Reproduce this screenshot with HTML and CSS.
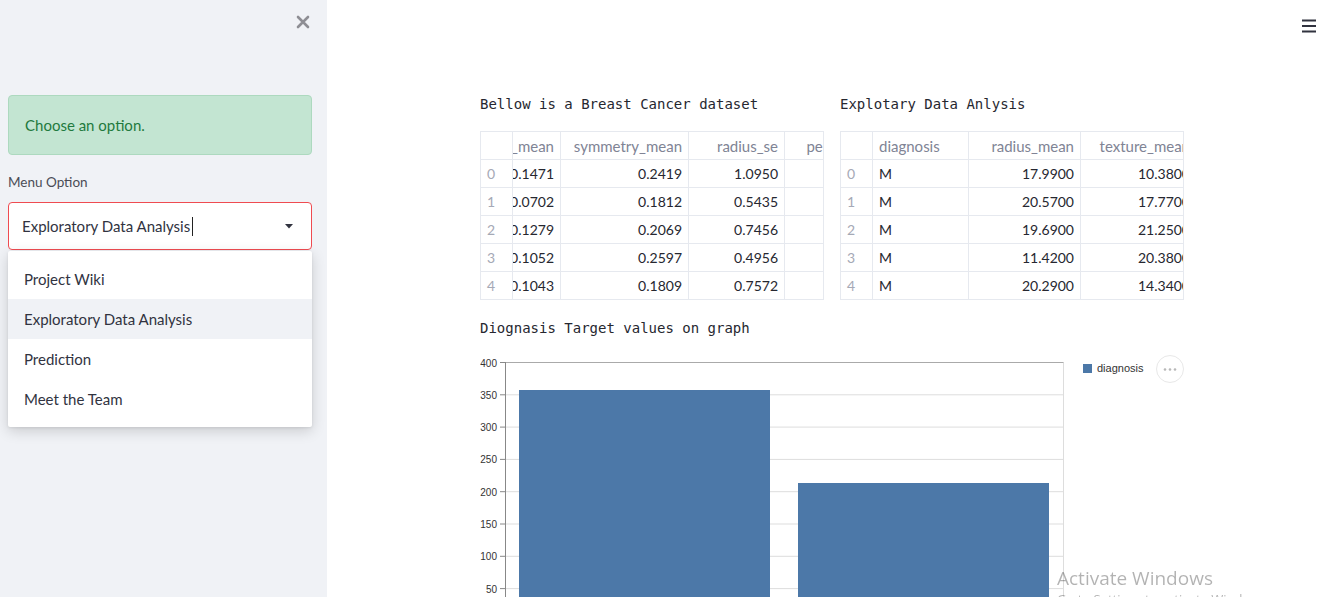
FILE: index.html
```html
<!DOCTYPE html>
<html lang="en">
<head>
<meta charset="utf-8">
<title>Breast Cancer App</title>
<link rel="stylesheet" href="styles.css">
</head>
<body>
<div class="app">
  <aside class="sidebar">
    <div class="sb-top">
      <button class="close-btn" aria-label="Close sidebar">
        <svg width="14" height="14" viewBox="0 0 14 14"><path d="M2 2 L12 12 M12 2 L2 12" stroke="#8e8e94" stroke-width="2.6" stroke-linecap="round"/></svg>
      </button>
    </div>
    <div class="alert">Choose an option.</div>
    <label class="field-label">Menu Option</label>
    <div class="select-wrap">
      <div class="select">
        <span class="select-value">Exploratory Data Analysis</span><span class="cursor"></span>
        <svg class="caret" width="10" height="6" viewBox="0 0 10 6"><path d="M1 1 L9 1 L5 5.5 Z" fill="#31333f"/></svg>
      </div>
      <ul class="menu">
        <li>Project Wiki</li>
        <li class="active">Exploratory Data Analysis</li>
        <li>Prediction</li>
        <li>Meet the Team</li>
      </ul>
    </div>
  </aside>

  <main class="main">
    <header class="topbar">
      <button class="hamburger" aria-label="Main menu">
        <svg width="14" height="14" viewBox="0 0 14 14"><path d="M0 1.5 H14 M0 7 H14 M0 12.5 H14" stroke="#31333f" stroke-width="1.8"/></svg>
      </button>
    </header>

    <div class="block">
      <div class="cols">
        <section class="col">
          <pre class="code-text">Bellow is a Breast Cancer dataset</pre>
          <div class="df">
            <table class="df-index">
              <tr><th></th></tr>
              <tr><td>0</td></tr>
              <tr><td>1</td></tr>
              <tr><td>2</td></tr>
              <tr><td>3</td></tr>
              <tr><td>4</td></tr>
            </table>
            <div class="df-viewport">
              <table class="df-data scrolled">
                <colgroup><col class="w172"><col class="w128"><col class="w96"><col class="w114"></colgroup>
                <tr><th class="num">concave points_mean</th><th class="num">symmetry_mean</th><th class="num">radius_se</th><th class="num">perimeter_se</th></tr>
                <tr><td class="num">0.1471</td><td class="num">0.2419</td><td class="num">1.0950</td><td class="num">8.5890</td></tr>
                <tr><td class="num">0.0702</td><td class="num">0.1812</td><td class="num">0.5435</td><td class="num">3.3980</td></tr>
                <tr><td class="num">0.1279</td><td class="num">0.2069</td><td class="num">0.7456</td><td class="num">4.5850</td></tr>
                <tr><td class="num">0.1052</td><td class="num">0.2597</td><td class="num">0.4956</td><td class="num">3.4450</td></tr>
                <tr><td class="num">0.1043</td><td class="num">0.1809</td><td class="num">0.7572</td><td class="num">5.4380</td></tr>
              </table>
            </div>
          </div>
        </section>

        <section class="col">
          <pre class="code-text">Explotary Data Anlysis</pre>
          <div class="df">
            <table class="df-index">
              <tr><th></th></tr>
              <tr><td>0</td></tr>
              <tr><td>1</td></tr>
              <tr><td>2</td></tr>
              <tr><td>3</td></tr>
              <tr><td>4</td></tr>
            </table>
            <div class="df-viewport">
              <table class="df-data plain">
                <colgroup><col class="w96"><col class="w112"><col class="w116"><col class="w120"></colgroup>
                <tr><th>diagnosis</th><th class="num">radius_mean</th><th class="num">texture_mean</th><th class="num">perimeter_mean</th></tr>
                <tr><td>M</td><td class="num">17.9900</td><td class="num">10.3800</td><td class="num">122.8000</td></tr>
                <tr><td>M</td><td class="num">20.5700</td><td class="num">17.7700</td><td class="num">132.9000</td></tr>
                <tr><td>M</td><td class="num">19.6900</td><td class="num">21.2500</td><td class="num">130.0000</td></tr>
                <tr><td>M</td><td class="num">11.4200</td><td class="num">20.3800</td><td class="num">77.5800</td></tr>
                <tr><td>M</td><td class="num">20.2900</td><td class="num">14.3400</td><td class="num">135.1000</td></tr>
              </table>
            </div>
          </div>
        </section>
      </div>

      <pre class="code-text chart-title">Diognasis Target values on graph</pre>
      <div class="chart">
        <svg width="704" height="260" viewBox="0 0 704 260">
          <g stroke="#dddddd" stroke-width="1">
            <line x1="25" y1="44.8" x2="583" y2="44.8"/>
            <line x1="25" y1="77.1" x2="583" y2="77.1"/>
            <line x1="25" y1="109.4" x2="583" y2="109.4"/>
            <line x1="25" y1="141.7" x2="583" y2="141.7"/>
            <line x1="25" y1="174" x2="583" y2="174"/>
            <line x1="25" y1="206.3" x2="583" y2="206.3"/>
            <line x1="25" y1="238.6" x2="583" y2="238.6"/>
            <line x1="583.5" y1="12.5" x2="583.5" y2="260"/>
          </g>
          <line x1="25" y1="12.5" x2="583.5" y2="12.5" stroke="#aaaaaa"/>
          <rect x="39" y="40" width="251" height="230" fill="#4c78a8"/>
          <rect x="318" y="133" width="251" height="140" fill="#4c78a8"/>
          <g stroke="#888888" stroke-width="1">
            <line x1="25.5" y1="12" x2="25.5" y2="260"/>
            <line x1="20" y1="12.5" x2="25" y2="12.5"/>
            <line x1="20" y1="44.8" x2="25" y2="44.8"/>
            <line x1="20" y1="77.1" x2="25" y2="77.1"/>
            <line x1="20" y1="109.4" x2="25" y2="109.4"/>
            <line x1="20" y1="141.7" x2="25" y2="141.7"/>
            <line x1="20" y1="174" x2="25" y2="174"/>
            <line x1="20" y1="206.3" x2="25" y2="206.3"/>
            <line x1="20" y1="238.6" x2="25" y2="238.6"/>
          </g>
          <g class="axis-label" text-anchor="end">
            <text x="17" y="16.5">400</text>
            <text x="17" y="48.8">350</text>
            <text x="17" y="81.1">300</text>
            <text x="17" y="113.4">250</text>
            <text x="17" y="145.7">200</text>
            <text x="17" y="178">150</text>
            <text x="17" y="210.3">100</text>
            <text x="17" y="242.6">50</text>
          </g>
          <rect x="603" y="14" width="9" height="9" fill="#4c78a8"/>
          <text class="legend-label" x="617" y="22">diagnosis</text>
          <circle cx="690" cy="19" r="13.5" fill="#fff" stroke="#e8e8e8"/>
          <g fill="#b8b8b8">
            <circle cx="685" cy="19.5" r="1.3"/>
            <circle cx="690" cy="19.5" r="1.3"/>
            <circle cx="695" cy="19.5" r="1.3"/>
          </g>
        </svg>
      </div>
    </div>
  </main>

  <div class="watermark">
    <div class="wm-title">Activate Windows</div>
    <div class="wm-sub">Go to Settings to activate Windows.</div>
  </div>
</div>
</body>
</html>
```

FILE: styles.css
```css
* { box-sizing: border-box; }

html, body {
  margin: 0;
  height: 100%;
}

body {
  font-family: Lato, "Noto Sans", sans-serif;
  color: #31333f;
  background: #ffffff;
  overflow: hidden;
}

.app {
  display: flex;
  height: 597px;
}

/* ---------- Sidebar ---------- */
.sidebar {
  width: 327px;
  flex: none;
  background: #f0f2f6;
  padding: 0 15px 0 8px;
}

.sb-top {
  height: 95px;
  display: flex;
  justify-content: flex-end;
  align-items: flex-start;
  padding-top: 15px;
}

.close-btn {
  border: none;
  background: none;
  padding: 0;
  margin-right: 2px;
  width: 14px;
  height: 14px;
  display: block;
}
.close-btn svg { display: block; }

.alert {
  height: 60px;
  background: #c3e5d2;
  border: 1px solid #add9bf;
  border-radius: 4px;
  padding: 0 16px;
  display: flex;
  align-items: center;
  color: #1f7a3e;
  font-size: 15px;
}

.field-label {
  display: block;
  margin-top: 19px;
  font-size: 13.5px;
  line-height: 16px;
  color: #4a4c55;
}

.select-wrap {
  position: relative;
  margin-top: 12px;
}

.select {
  height: 48px;
  background: #ffffff;
  border: 1px solid #ef4b51;
  border-radius: 4px;
  display: flex;
  align-items: center;
  padding: 0 17px 0 13px;
  font-size: 15px;
  color: #31333f;
}

.cursor {
  display: inline-block;
  width: 1px;
  height: 19px;
  background: #222;
  margin-left: 2px;
}

.caret {
  margin-left: auto;
  display: block;
}

.menu {
  position: absolute;
  top: calc(100% + 1px);
  left: 0;
  right: 0;
  margin: 0;
  padding: 8px 0;
  list-style: none;
  background: #ffffff;
  border-radius: 2px;
  box-shadow: 0 4px 14px rgba(0, 0, 0, 0.16), 0 1px 3px rgba(0, 0, 0, 0.08);
}

.menu li {
  height: 40px;
  display: flex;
  align-items: center;
  padding-left: 16px;
  font-size: 15px;
  color: #31333f;
}

.menu li.active { background: #f0f2f6; }

/* ---------- Main ---------- */
.main {
  flex: 1;
  min-width: 0;
}

.topbar {
  height: 40px;
  display: flex;
  justify-content: flex-end;
  padding: 19px 21px 0 0;
}

.hamburger {
  border: none;
  background: none;
  padding: 0;
  width: 14px;
  height: 14px;
}
.hamburger svg { display: block; }

.block {
  width: 704px;
  margin: 54px auto 0;
}

.cols {
  display: grid;
  grid-template-columns: minmax(0, 1fr) minmax(0, 1fr);
  gap: 16px;
}

.col { min-width: 0; }

.code-text {
  font-family: "DejaVu Sans Mono", monospace;
  font-size: 14px;
  line-height: 20px;
  margin: 0 0 17px;
  color: #262730;
}

/* ---------- Dataframes ---------- */
.df {
  display: flex;
  width: 100%;
  border: 1px solid #e6e9ef;
  height: 169px;
  overflow: hidden;
  font-size: 14px;
  background: #fff;
}

.df table {
  border-collapse: separate;
  border-spacing: 0;
  table-layout: fixed;
}

.df th,
.df td {
  height: 28px;
  padding: 0 6px;
  border-bottom: 1px solid #e6e9ef;
  border-right: 1px solid #e6e9ef;
  white-space: nowrap;
  overflow: hidden;
  font-weight: normal;
  text-align: left;
  color: #262730;
}

.df tr:last-child td {
  border-bottom: none;
  height: 27px;
}

.df th {
  color: #808495;
  font-size: 15px;
}

.df-index {
  width: 32px;
  flex: none;
}
.df-index td { color: #a5a9b6; }

.df-viewport {
  flex: 1;
  min-width: 0;
  overflow: hidden;
}

.df .num { text-align: right; }

.df-data.scrolled {
  width: 510px;
  margin-left: -124px;
}

.df-data.plain { width: 444px; }

.w96 { width: 96px; }
.w112 { width: 112px; }
.w114 { width: 114px; }
.w116 { width: 116px; }
.w120 { width: 120px; }
.w128 { width: 128px; }
.w172 { width: 172px; }

/* ---------- Chart ---------- */
.chart-title {
  margin-top: 18px;
  margin-bottom: 12px;
}

.chart svg { display: block; }

.axis-label text {
  font-family: "Liberation Sans", sans-serif;
  font-size: 10px;
  fill: #333;
}

.legend-label {
  font-family: "Liberation Sans", sans-serif;
  font-size: 11px;
  fill: #333;
}

/* ---------- OS watermark overlay ---------- */
.watermark {
  position: fixed;
  left: 1057px;
  top: 566px;
  color: rgba(0, 0, 0, 0.3);
  font-family: "Open Sans", "Noto Sans", sans-serif;
  pointer-events: none;
}

.wm-title {
  font-size: 19px;
  line-height: 24px;
}

.wm-sub {
  font-size: 13px;
  line-height: 18px;
}
```
